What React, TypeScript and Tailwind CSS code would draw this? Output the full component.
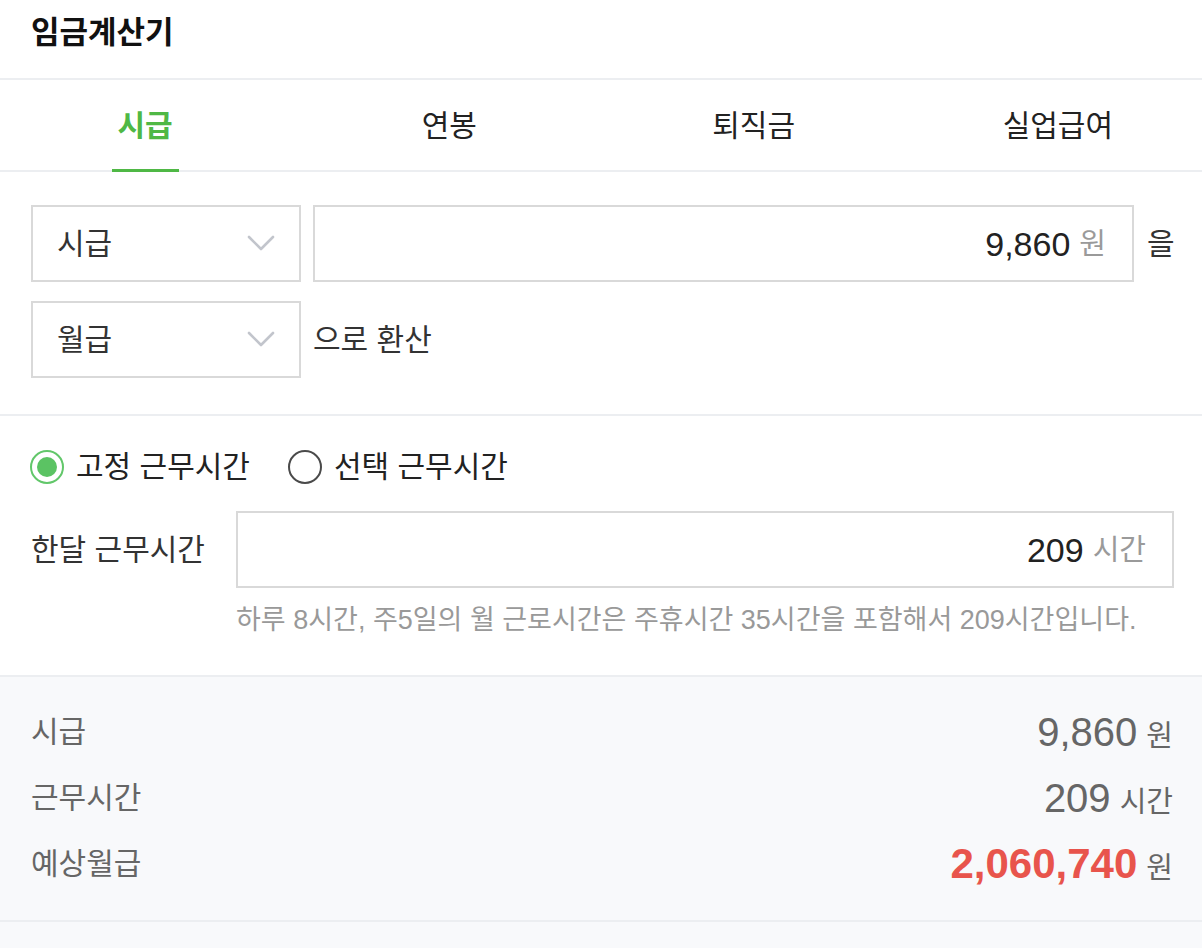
import React from "react";

const FONT = { fontFamily: '"Liberation Sans", "Noto Sans CJK KR", sans-serif' };

function Chevron() {
    return (
        <svg width="28" height="17" viewBox="0 0 28 17" fill="none">
            <polyline points="2,2 14,14 26,2" stroke="#c2c5cc" strokeWidth="2.6" strokeLinejoin="round" strokeLinecap="round" />
        </svg>
    );
}

function Select({ label }: { label: string }) {
    return (
        <div className="flex h-[77px] w-[270px] shrink-0 items-center justify-between border-2 border-[#d9d9d9] pl-[24px] pr-[24px]">
            <span className="text-[30px] leading-[40px] text-[#333]">{label}</span>
            <Chevron />
        </div>
    );
}

function Radio({ checked, label }: { checked: boolean; label: string }) {
    return (
        <div className="flex items-center gap-[12px]">
            {checked ? (
                <div className="flex h-[34px] w-[34px] items-center justify-center rounded-full border-2 border-[#62c76a]">
                    <div className="h-[20px] w-[20px] rounded-full bg-[#5bc363]" />
                </div>
            ) : (
                <div className="h-[34px] w-[34px] rounded-full border-2 border-[#4a4a4a]" />
            )}
            <span className="text-[30px] leading-[40px] text-[#222]">{label}</span>
        </div>
    );
}

export default function App() {
    const tabs = ["시급", "연봉", "퇴직금", "실업급여"];
    const rows = [
        { label: "시급", value: "9,860", unit: "원", strong: false },
        { label: "근무시간", value: "209", unit: "시간", strong: false },
        { label: "예상월급", value: "2,060,740", unit: "원", strong: true },
    ];

    return (
        <div className="min-h-screen w-full overflow-hidden bg-white" style={FONT}>
            <div className="flex h-[80px] items-start border-b-2 border-[#eceef1] px-[31px] pt-[13px]">
                <h1 className="text-[31px] font-bold leading-[40px] text-[#111]">임금계산기</h1>
            </div>

            <div className="border-b-2 border-[#eceef1]">
                <div className="-ml-[7px] grid h-[90px] w-[1217px] grid-cols-4">
                    {tabs.map((t, i) => (
                        <div key={t} className="flex items-center justify-center">
                            <div
                                className={
                                    i === 0
                                        ? "relative flex h-full items-center px-[6px] text-[30px] font-bold text-[#4fb845]"
                                        : "flex h-full items-center px-[6px] text-[30px] text-[#222]"
                                }
                            >
                                {t}
                                {i === 0 && <div className="absolute -bottom-[2px] left-0 right-0 h-[3px] bg-[#4fb845]" />}
                            </div>
                        </div>
                    ))}
                </div>
            </div>

            <div className="flex flex-col gap-[19px] border-b-2 border-[#eceef1] pl-[31px] pr-[25px] pt-[33px] pb-[36px]">
                <div className="flex items-center gap-[12px]">
                    <Select label="시급" />
                    <div className="flex h-[77px] flex-1 items-center justify-end gap-[9px] border-2 border-[#d9d9d9] pr-[26px]">
                        <span className="text-[34px] leading-[40px] text-[#222]">9,860</span>
                        <span className="text-[29px] leading-[40px] text-[#9a9a9a]">원</span>
                    </div>
                    <span className="ml-[1px] w-[30px] text-[30px] leading-[40px] text-[#333]">을</span>
                </div>
                <div className="flex items-center gap-[12px]">
                    <Select label="월급" />
                    <span className="text-[30px] leading-[40px] text-[#333]">으로 환산</span>
                </div>
            </div>

            <div className="border-b-2 border-[#eceef1] pl-[30px] pr-[28px] pt-[33px] pb-[40px]">
                <div className="flex h-[36px] items-center gap-[38px]">
                    <Radio checked label="고정 근무시간" />
                    <Radio checked={false} label="선택 근무시간" />
                </div>
                <div className="mt-[26px] flex items-center">
                    <span className="w-[206px] shrink-0 pl-[1px] text-[30px] leading-[40px] text-[#333]">한달 근무시간</span>
                    <div className="flex h-[77px] flex-1 items-center justify-end gap-[9px] border-2 border-[#d9d9d9] pr-[26px]">
                        <span className="text-[34px] leading-[40px] text-[#222]">209</span>
                        <span className="text-[29px] leading-[40px] text-[#9a9a9a]">시간</span>
                    </div>
                </div>
                <p className="mt-[17px] pl-[206px] text-[27px] leading-[30px] text-[#999]">
                    하루 8시간, 주5일의 월 근로시간은 주휴시간 35시간을 포함해서 209시간입니다.
                </p>
            </div>

            <div className="flex flex-col border-b-2 border-[#eceef1] bg-[#f8f9fb] pl-[31px] pr-[29px] pt-[22px] pb-[23px]">
                {rows.map((r) => (
                    <div key={r.label} className="flex h-[66px] items-center justify-between">
                        <span className="text-[30px] leading-[40px] text-[#666]">{r.label}</span>
                        <div className="flex items-baseline gap-[9px]">
                            <span
                                className={
                                    r.strong
                                        ? "text-[42px] font-bold leading-[48px] text-[#e8544c]"
                                        : "text-[40px] leading-[48px] text-[#666]"
                                }
                            >
                                {r.value}
                            </span>
                            <span className="text-[29px] leading-[40px] text-[#666]">{r.unit}</span>
                        </div>
                    </div>
                ))}
            </div>
            <div className="h-[40px] bg-[#f8f9fb]" />
        </div>
    );
}
